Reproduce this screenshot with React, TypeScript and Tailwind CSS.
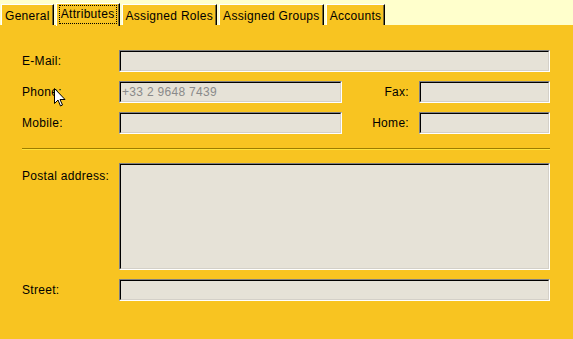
import { ReactNode } from "react";

// 탭 목록
const tabs = ["General", "Attributes", "Assigned Roles", "Assigned Groups", "Accounts"];

function Tab({ label, active }: { label: string; active: boolean }) {
  if (active) {
    return (
      <div className="relative -mb-px flex h-[23px] items-start border-l border-t border-white border-r border-r-black bg-[#f8c421] px-[2px] pt-[1px] shadow-[inset_-1px_0_0_#7a6a30]">
        <div className="border border-dotted border-black px-[1px] leading-[17px]">{label}</div>
      </div>
    );
  }
  return (
    <div className="flex h-[21px] items-center border-l border-t border-white border-r border-r-black bg-[#f8c421] px-[3px] pt-[1px] shadow-[inset_-1px_0_0_#7a6a30]">
      {label}
    </div>
  );
}

// 들어간 입력칸
function Field({ className, value, tall }: { className: string; value?: string; tall?: boolean }) {
  return (
    <div className={`border border-t-[#808080] border-l-[#808080] border-b-white border-r-white ${className}`}>
      <div
        className={`flex border border-t-black border-l-black border-b-[#d4d0c8] border-r-[#d4d0c8] bg-[#e6e2d7] px-[1px] text-[#8a8a8a] ${
          tall ? "h-[105px] items-start" : "h-[20px] items-center"
        }`}
      >
        {value}
      </div>
    </div>
  );
}

function Row({ label, children }: { label: string; children: ReactNode }) {
  return (
    <div className="flex items-center">
      <div className="w-[97px] shrink-0">{label}</div>
      {children}
    </div>
  );
}

export default function App() {
  return (
    <div className="relative flex h-[339px] w-[573px] flex-col overflow-hidden bg-[#f8c421] font-['Liberation_Sans',Arial,sans-serif] text-[12px] tracking-[0.3px] text-black">
      <div className="flex h-[26px] shrink-0 items-end gap-[2px] border-b border-[#f8c421] bg-[#ffffcc] pl-[1px]">
        {tabs.map((t) => (
          <Tab key={t} label={t} active={t === "Attributes"} />
        ))}
      </div>

      <div className="flex flex-col pl-[22px] pr-[23px] pt-[24px]">
        <Row label="E-Mail:">
          <Field className="flex-1" />
        </Row>
        <div className="mt-[9px] flex items-center">
          <div className="w-[97px] shrink-0">Phone:</div>
          <Field className="w-[223px]" value="+33 2 9648 7439" />
          <div className="w-[77px] pr-[10px] text-right">Fax:</div>
          <Field className="flex-1" />
        </div>
        <div className="mt-[9px] flex items-center">
          <div className="w-[97px] shrink-0">Mobile:</div>
          <Field className="w-[223px]" />
          <div className="w-[77px] pr-[10px] text-right">Home:</div>
          <Field className="flex-1" />
        </div>

        <div className="mt-[14px] border-t border-b border-t-[#9c7c00] border-b-[#ffe23a]" />

        <div className="mt-[13px] flex items-start">
          <div className="w-[97px] shrink-0 pt-[4px]">Postal address:</div>
          <Field className="flex-1" tall />
        </div>
        <div className="mt-[9px] flex items-center">
          <div className="w-[97px] shrink-0">Street:</div>
          <Field className="flex-1" />
        </div>
      </div>

      {/* 마우스 포인터 */}
      <svg className="absolute left-[54px] top-[88px]" width="13" height="20" viewBox="0 0 13 20">
        <path d="M0.5 0.5 L0.5 15.5 L4 12 L6.5 18 L8.5 17 L6 11.5 L11 11.5 Z" fill="white" stroke="black" strokeWidth="1" />
      </svg>
    </div>
  );
}
